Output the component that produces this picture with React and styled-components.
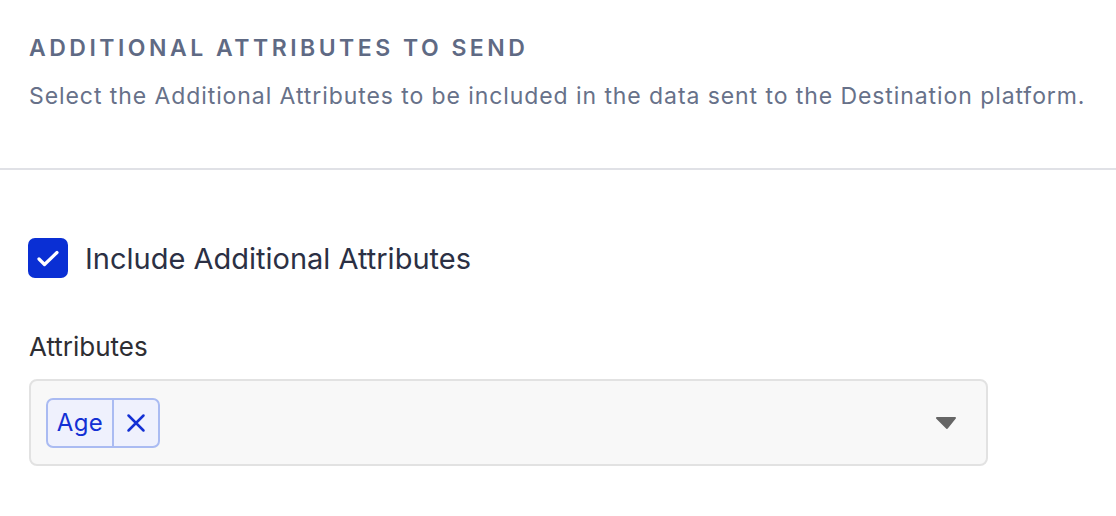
import React from "react";
import styled, { createGlobalStyle } from "styled-components";

const Global = createGlobalStyle`
  html, body { margin: 0; padding: 0; background: #ffffff; }
  body { font-family: Inter, "Noto Sans", sans-serif; -webkit-font-smoothing: antialiased; }
`;

const Page = styled.div`
  width: 1116px;
  height: 516px;
  background: #fff;
  overflow: hidden;
`;

const Header = styled.header`
  padding: 34px 29px 0;
  height: 170px;
  box-sizing: border-box;
  border-bottom: 2px solid #e0e1e6;
`;

const Title = styled.h2`
  margin: 0;
  font-size: 23px;
  line-height: 28px;
  font-weight: 600;
  letter-spacing: 3.5px;
  color: #5f6a84;
  text-transform: uppercase;
`;

const Description = styled.p`
  margin: 20px 0 0;
  font-size: 23px;
  line-height: 28px;
  letter-spacing: 0.92px;
  color: #677189;
  white-space: nowrap;
`;

const Body = styled.section`
  padding: 68px 29px 0 28px;
  display: flex;
  flex-direction: column;
`;

const CheckRow = styled.label`
  display: flex;
  align-items: center;
  gap: 17px;
`;

const Box = styled.span`
  width: 40px;
  height: 40px;
  border-radius: 7px;
  background: #0a2fd4;
  display: flex;
  align-items: center;
  justify-content: center;
`;

const CheckLabel = styled.span`
  font-size: 29px;
  color: #2b3044;
`;

const FieldLabel = styled.div`
  margin-top: 53px;
  margin-left: 1px;
  font-size: 26px;
  line-height: 32px;
  color: #2e2e33;
`;

const Select = styled.div`
  margin-top: 16px;
  margin-left: 1px;
  width: 959px;
  height: 87px;
  box-sizing: border-box;
  background: #f8f8f8;
  border: 2px solid #e2e2e2;
  border-radius: 8px;
  display: flex;
  align-items: center;
  padding: 0 29px 0 15px;
`;

const Chip = styled.div`
  display: flex;
  align-items: stretch;
  height: 50px;
  box-sizing: border-box;
  border: 2px solid #aabbf2;
  border-radius: 7px;
  background: #eff1fd;
  color: #1330d4;
`;

const ChipText = styled.span`
  display: flex;
  align-items: center;
  width: 64px;
  justify-content: center;
  font-size: 24px;
  letter-spacing: 0.4px;
  border-right: 2px solid #aabbf2;
`;

const ChipRemove = styled.span`
  display: flex;
  align-items: center;
  justify-content: center;
  width: 44px;
`;

const Spacer = styled.div`
  flex: 1;
`;

const Caret = styled.svg`
  width: 22px;
  height: 14px;
`;

export default function App() {
  return (
    <Page>
      <Global />
      <Header>
        <Title>Additional Attributes to send</Title>
        <Description>
          Select the Additional Attributes to be included in the data sent to the Destination platform.
        </Description>
      </Header>
      <Body>
        <CheckRow>
          <Box>
            <svg width="26" height="26" viewBox="0 0 26 26" fill="none">
              <path d="M4 14l5.5 5.5L22 7.5" stroke="#fff" strokeWidth="3.2" strokeLinecap="round" strokeLinejoin="round" />
            </svg>
          </Box>
          <CheckLabel>Include Additional Attributes</CheckLabel>
        </CheckRow>
        <FieldLabel>Attributes</FieldLabel>
        <Select>
          <Chip>
            <ChipText>Age</ChipText>
            <ChipRemove>
              <svg width="20" height="20" viewBox="0 0 20 20" fill="none">
                <path d="M2.5 2.5l15 15M17.5 2.5l-15 15" stroke="#1330d4" strokeWidth="2.5" strokeLinecap="round" />
              </svg>
            </ChipRemove>
          </Chip>
          <Spacer />
          <Caret viewBox="0 0 22 14">
            <path d="M2 2h18l-8 10z" fill="#666" stroke="#666" strokeWidth="2" strokeLinejoin="round" />
          </Caret>
        </Select>
      </Body>
    </Page>
  );
}
